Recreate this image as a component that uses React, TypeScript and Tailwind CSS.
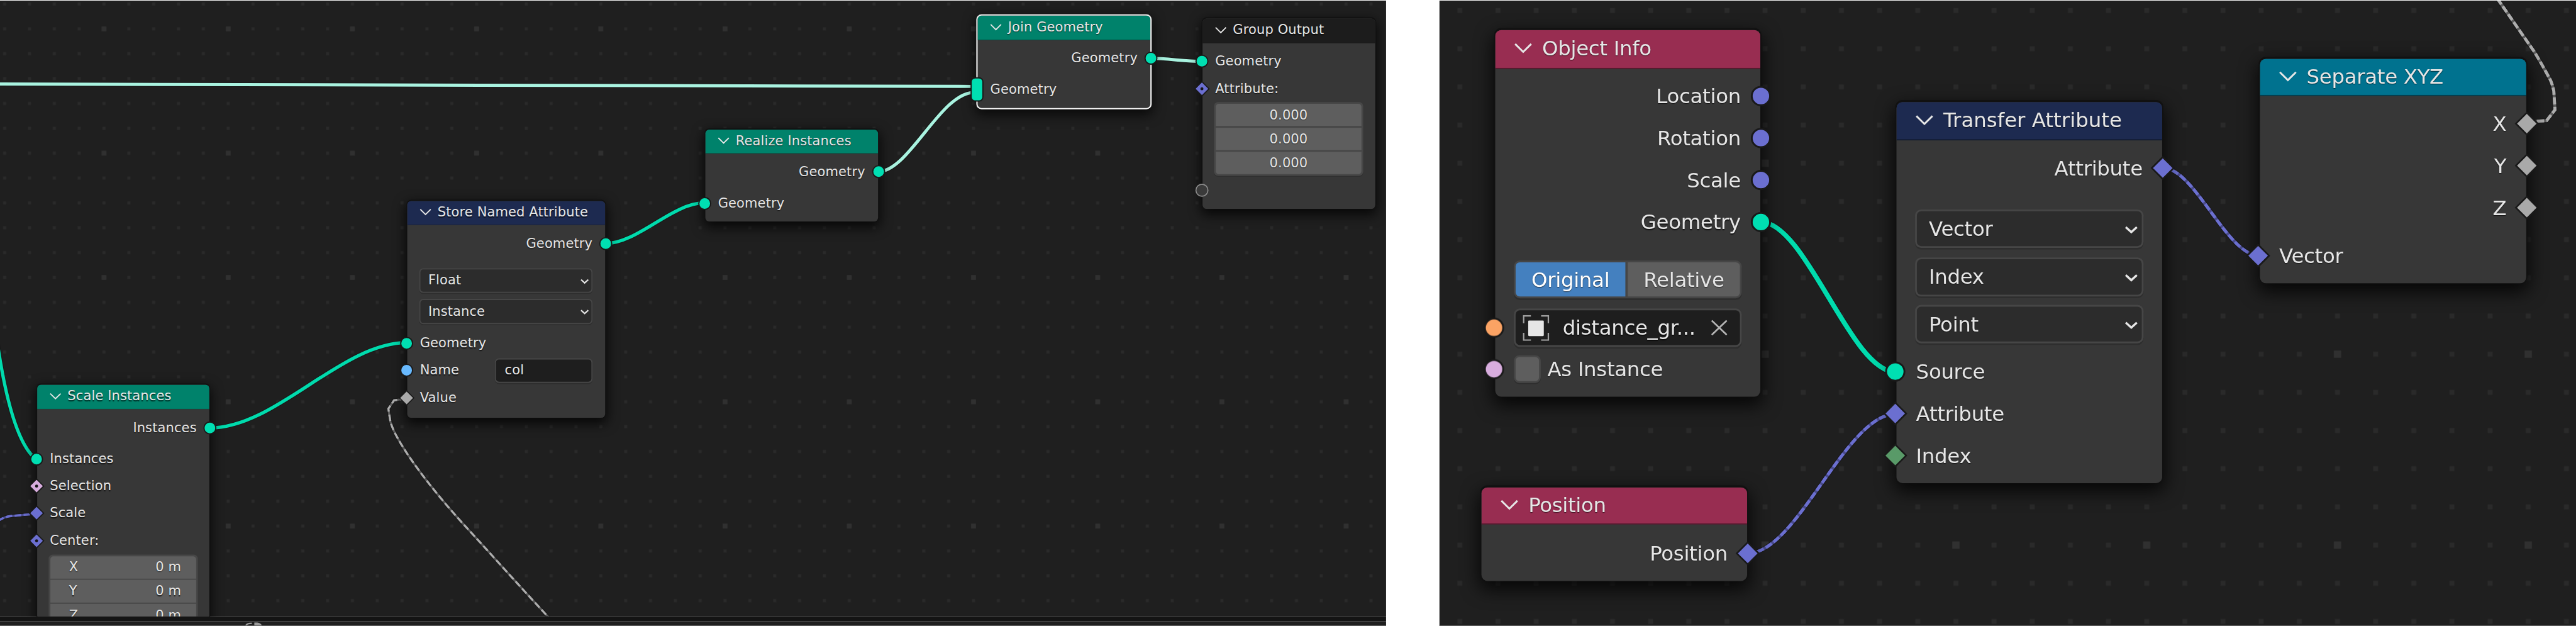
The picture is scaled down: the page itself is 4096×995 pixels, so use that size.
import type { ReactNode } from "react";

type SocketKind = "geometry" | "vector" | "float" | "string" | "boolean" | "integer" | "object";

const SOCKET_COLORS: Record<SocketKind, string> = {
  geometry: "#00dfb2",
  vector: "#6b6fd0",
  float: "#a9a9a9",
  string: "#68b9fe",
  boolean: "#d8adde",
  integer: "#599a68",
  object: "#fba364",
};

function Socket({
  kind,
  shape = "circle",
  side,
}: {
  kind: SocketKind;
  shape?: "circle" | "diamond" | "diamond-dot" | "multi" | "empty";
  side: "left" | "right";
}) {
  const place =
    side === "left"
      ? "absolute left-[-0.06em] top-1/2 -translate-x-1/2 -translate-y-1/2"
      : "absolute right-[-0.04em] top-1/2 translate-x-1/2 -translate-y-1/2";
  const fill = SOCKET_COLORS[kind];
  return (
    <svg className={`${place} h-[2em] w-[1.5em] overflow-visible`} viewBox="-16.5 -22 33 44">
      {shape === "circle" && <circle r="9.9" fill={fill} stroke="#191919" strokeWidth="2" />}
      {shape === "multi" && (
        <rect x="-9.8" y="-19.3" width="19.6" height="38.6" rx="6.5" fill={fill} stroke="#191919" strokeWidth="2" />
      )}
      {shape === "empty" && <circle r="10" fill="#3a3a3a" stroke="#8c8c8c" strokeWidth="1.8" />}
      {(shape === "diamond" || shape === "diamond-dot") && (
        <path d="M0 -11.8 L11.8 0 L0 11.8 L-11.8 0 Z" fill={fill} stroke="#191919" strokeWidth="1.8" />
      )}
      {shape === "diamond-dot" && <circle r="2.5" fill="#141414" />}
    </svg>
  );
}

function Node({
  title,
  header,
  frame,
  selected = false,
  children,
}: {
  title: string;
  header: string;
  frame: string;
  selected?: boolean;
  children: ReactNode;
}) {
  const ring = selected
    ? "shadow-[0_0_0_0.1em_#f4f4f4,0_0.3em_0.9em_0.15em_rgba(0,0,0,0.75)]"
    : "shadow-[0_-0.04em_0_0.06em_#111111,0_0.3em_0.9em_0.1em_rgba(0,0,0,0.8)]";
  return (
    <section className={`absolute flex flex-col rounded-[0.3em] bg-[#373737] ${ring} ${frame}`}>
      <header
        className={`flex shrink-0 items-center rounded-t-[0.3em] border-b-[0.07em] border-black/45 pb-[0.06em] pl-[0.95em] ${header}`}
      >
        <svg className="mr-[0.49em] h-[0.48em] w-[0.86em] overflow-visible" viewBox="0 0 19 10.6">
          <path d="M0.8 0.8 L9.5 9.4 L18.2 0.8" fill="none" stroke="#e6e6e6" strokeWidth="2" />
        </svg>
        <h2>{title}</h2>
      </header>
      {children}
    </section>
  );
}

function Row({
  label,
  kind,
  shape,
  output = false,
  size,
  children,
}: {
  label?: string;
  kind: SocketKind;
  shape?: "circle" | "diamond" | "diamond-dot" | "multi" | "empty";
  output?: boolean;
  size: string;
  children?: ReactNode;
}) {
  return (
    <div className={`relative flex shrink-0 items-center px-[0.96em] ${output ? "justify-end" : "justify-between"} ${size}`}>
      <Socket kind={kind} shape={shape} side={output ? "right" : "left"} />
      <span>{label}</span>
      {children}
    </div>
  );
}

function Dropdown({ value, size }: { value: string; size: string }) {
  return (
    <div
      className={`flex shrink-0 items-center justify-between rounded-[0.3em] border-[0.11em] border-[#464646] bg-[#2c2c2c] pl-[0.59em] pr-[0.2em] shadow-[0_0.08em_0_#2e2e2e] ${size}`}
    >
      <span>{value}</span>
      <svg className="mt-[0.1em] h-[0.34em] w-[0.62em] overflow-visible" viewBox="0 0 13 7">
        <path d="M0.8 0.8 L6.5 6 L12.2 0.8" fill="none" stroke="#e6e6e6" strokeWidth="2.2" />
      </svg>
    </div>
  );
}

function VectorField({ items, className }: { items: { axis?: string; value: string }[]; className: string }) {
  return (
    <div
      className={`flex shrink-0 flex-col gap-[2.7px] rounded-[7px] bg-[#474747] p-[3px] shadow-[0_1.5px_0_#303030] ${className}`}
    >
      {items.map((item, i) => (
        <div
          key={i}
          className={`flex h-[37.3px] items-center bg-[#5e5e5e] first:rounded-t-[5px] last:rounded-b-[5px] ${
            item.axis ? "justify-between pl-[31px] pr-[25px]" : "justify-center"
          }`}
        >
          {item.axis && <span>{item.axis}</span>}
          <span>{item.value}</span>
        </div>
      ))}
    </div>
  );
}

function Grid({ id, pitch, x, y, small, large }: { id: string; pitch: number; x: number; y: number; small: number; large: number }) {
  const tile = pitch * 5;
  return (
    <>
      <defs>
        <pattern id={`${id}-s`} patternUnits="userSpaceOnUse" width={pitch} height={pitch} x={x - pitch / 2} y={y - pitch / 2}>
          <rect x={(pitch - small) / 2} y={(pitch - small) / 2} width={small} height={small} fill="#2a2a2a" />
        </pattern>
        <pattern id={`${id}-l`} patternUnits="userSpaceOnUse" width={tile} height={tile} x={x - tile / 2} y={y - tile / 2}>
          <rect x={(tile - large) / 2} y={(tile - large) / 2} width={large} height={large} fill="#303030" />
        </pattern>
      </defs>
      <rect width="100%" height="100%" fill={`url(#${id}-s)`} />
      <rect width="100%" height="100%" fill={`url(#${id}-l)`} />
    </>
  );
}

function Link({
  d,
  color,
  width,
  dash,
  dim,
}: {
  d: string;
  color: string;
  width: number;
  dash?: string;
  dim?: string;
}) {
  return (
    <g fill="none">
      <path d={d} stroke="#141414" strokeOpacity="0.55" strokeWidth={width + 2.5} />
      {dim && <path d={d} stroke={dim} strokeWidth={width} />}
      <path d={d} stroke={color} strokeWidth={width} strokeDasharray={dash} />
    </g>
  );
}

function InstancingEditor() {
  return (
    <div className="flex h-[1042px] w-[2311px] flex-col">
      <div className="relative h-[1026px] overflow-hidden bg-[#1f1f1f] text-[22px] leading-none tracking-[0.006em]">
        <svg className="absolute inset-0 h-full w-full" viewBox="0 0 2311 1026">
          <Grid id="grid-a" pitch={41.42} x={380.5} y={875.5} small={5} large={8} />
          <Link d="M0 139 C540 139 1080 143 1622 143" color="#a9f3e0" width={5.2} />
          <Link d="M1464 285 C1516 285 1568 153 1624 153" color="#a9f3e0" width={5.2} />
          <Link d="M1919 96.3 C1947 96.3 1975 101.3 2004 101.3" color="#a9f3e0" width={5.2} />
          <Link d="M1009 404.7 C1064 404.7 1120 337 1175 337" color="#00dbad" width={5.5} />
          <Link d="M350 712 C460 712 569 570 678 570" color="#00dbad" width={5.5} />
          <Link d="M-6 559 C8 659 28 739 60 764" color="#00dbad" width={5.5} />
          <Link d="M-4 867 Q8 860 16 859 L60 855" color="#6b6fd0" width={3.6} dash="11 4" dim="#4a4c8c" />
          <Link
            d="M678 663 L657 666 L647.5 680 L651 702 Q655 715 663 729 C690 777 740 837 777 877 S860 969 917 1030"
            color="#adadad"
            width={3.4}
            dash="11 5"
            dim="#5e5e5e"
          />
        </svg>

        <Node title="Scale Instances" header="h-[41px] bg-[#00826b]" frame="left-[62px] top-[640px] w-[287px] h-[410px]">
          <Row label="Instances" kind="geometry" output size="h-[62px]" />
          <Row label="Instances" kind="geometry" size="h-[42.5px]" />
          <Row label="Selection" kind="boolean" shape="diamond-dot" size="h-[46px]" />
          <Row label="Scale" kind="vector" shape="diamond" size="h-[45.5px]" />
          <Row label="Center:" kind="vector" shape="diamond-dot" size="h-[45.5px]" />
          <VectorField
            className="mx-[19px]"
            items={[
              { axis: "X", value: "0 m" },
              { axis: "Y", value: "0 m" },
              { axis: "Z", value: "0 m" },
            ]}
          />
        </Node>

        <Node title="Store Named Attribute" header="h-[40.5px] bg-[#1d2a50]" frame="left-[679px] top-[333.5px] w-[330px] h-[361.5px]">
          <Row label="Geometry" kind="geometry" output size="h-[61.4px]" />
          <Dropdown value="Float" size="mt-[10.6px] ml-[20px] mr-[21px] h-[41px]" />
          <Dropdown value="Instance" size="mt-[10px] mb-[8.7px] ml-[20px] mr-[21px] h-[42px]" />
          <Row label="Geometry" kind="geometry" size="h-[46px]" />
          <Row label="Name" kind="string" size="h-[45.5px]">
            <div className="flex h-[41px] w-[163.4px] items-center rounded-[7px] border-[2.5px] border-[#464646] bg-[#1e1e1e] pl-[15px] shadow-[0_2px_0_#2e2e2e]">
              col
            </div>
          </Row>
          <Row label="Value" kind="float" shape="diamond" size="h-[45.5px]" />
        </Node>

        <Node title="Realize Instances" header="h-[40px] bg-[#00826b]" frame="left-[1176px] top-[214.7px] w-[287.7px] h-[153px]">
          <Row label="Geometry" kind="geometry" output size="h-[61px]" />
          <Row label="Geometry" kind="geometry" size="h-[43.8px]" />
        </Node>

        <Node title="Join Geometry" header="h-[40.5px] bg-[#00826b]" frame="left-[1630px] top-[25px] w-[288px] h-[153.5px]" selected>
          <Row label="Geometry" kind="geometry" output size="h-[61.6px]" />
          <Row label="Geometry" kind="geometry" shape="multi" size="h-[42px]" />
        </Node>

        <Node title="Group Output" header="h-[41px] bg-[#1c1c1c]" frame="left-[2005px] top-[29.7px] w-[288px] h-[317.3px]">
          <Row label="Geometry" kind="geometry" size="mt-[8px] h-[45.4px]" />
          <Row label="Attribute:" kind="vector" shape="diamond-dot" size="h-[45px]" />
          <VectorField className="ml-[19px] mr-[20px]" items={[{ value: "0.000" }, { value: "0.000" }, { value: "0.000" }]} />
          <Row kind="float" shape="empty" size="mt-[0.6px] h-[46px]" />
        </Node>
      </div>
      <div className="h-[8px] bg-[#141414]" />
      <div className="flex h-[8px] flex-col justify-end border-b border-[#6a6a6a] bg-[#1f1f1f] pl-[409px]">
        <svg className="h-[5px] w-[28px]" viewBox="0 0 28 5">
          <path d="M1 5 Q3 1.5 11 1.5" fill="none" stroke="#9a9a9a" strokeWidth="2.4" />
          <path d="M15 0 H20 Q26 1 27.5 5 H15 Z" fill="#9a9a9a" />
        </svg>
      </div>
    </div>
  );
}

function TransferEditor() {
  return (
    <div className="relative h-[1042px] w-[1895px] overflow-hidden border-b border-[#6a6a6a] bg-[#1f1f1f] text-[34px] leading-none tracking-[-0.01em]">
      <svg className="absolute inset-0 h-full w-full" viewBox="0 0 1895 1041" preserveAspectRatio="xMinYMin slice">
        <Grid id="grid-b" pitch={63.62} x={543} y={271} small={8} large={12} />
        <Link d="M536 369 C611 369 686 618.5 760 618.5" color="#00dbad" width={8} />
        <Link d="M514 921 C596 921 678 689 760 689" color="#6b6fd0" width={5.2} dash="12 4" dim="#4a4c8c" />
        <Link d="M1206 278.7 C1259 278.7 1313 424.7 1366 424.7" color="#6b6fd0" width={5.2} dash="12 4" dim="#4a4c8c" />
        <Link
          d="M1814 203 L1830 201 L1846 200 L1860 182 L1858 151 Q1855 136 1850 128 Q1838 106 1826 86 L1762 -6"
          color="#adadad"
          width={5}
          dash="12 4"
          dim="#5e5e5e"
        />
      </svg>

      <Node title="Object Info" header="h-[65px] bg-[#982d51]" frame="left-[93px] top-[49px] w-[442px] h-[611px]">
        <Row label="Location" kind="vector" output size="mt-[10px] h-[70px]" />
        <Row label="Rotation" kind="vector" output size="h-[70px]" />
        <Row label="Scale" kind="vector" output size="h-[70px]" />
        <Row label="Geometry" kind="geometry" output size="h-[70px]" />
        <div className="mx-[31px] mt-[29px] flex h-[63px] shrink-0 gap-[4px] rounded-[10px] bg-[#464646] p-[3px] shadow-[0_3px_0_#2e2e2e]">
          <div className="flex w-[183px] items-center justify-center rounded-l-[7px] bg-[#4480bf] text-white">Original</div>
          <div className="flex flex-1 items-center justify-center rounded-r-[7px] bg-[#5e5e5e]">Relative</div>
        </div>
        <div className="relative mt-[17px] flex shrink-0 px-[31px]">
          <Socket kind="object" side="left" />
          <div className="flex h-[64px] w-full items-center rounded-[10px] border-[3.5px] border-[#464646] bg-[#1e1e1e] pl-[11.5px] pr-[21px] shadow-[0_3px_0_#2e2e2e]">
            <svg className="h-[43px] w-[44px]" viewBox="0 0 44 43">
              <path
                d="M1.3 13.5 V1.3 H13.5 M30.5 1.3 H42.7 V13.5 M42.7 29.5 V41.7 H30.5 M13.5 41.7 H1.3 V29.5"
                fill="none"
                stroke="#a0a0a0"
                strokeWidth="2.6"
              />
              <rect x="9" y="9" width="26" height="26" rx="1.5" fill="#e6e6e6" />
            </svg>
            <span className="ml-[23px] flex-1">distance_gr...</span>
            <svg className="h-[26px] w-[27px]" viewBox="0 0 27 26">
              <path d="M1 1 L26 25 M26 1 L1 25" fill="none" stroke="#b4b4b4" strokeWidth="2.8" />
            </svg>
          </div>
        </div>
        <div className="relative mt-[13.5px] flex h-[46px] shrink-0 items-center gap-[11px] px-[31px]">
          <Socket kind="boolean" side="left" />
          <div className="h-[46px] w-[45px] rounded-[9px] border-[3.5px] border-[#464646] bg-[#5e5e5e] shadow-[0_2px_0_#2e2e2e]" />
          <span>As Instance</span>
        </div>
      </Node>

      <Node title="Position" header="h-[62px] bg-[#982d51]" frame="left-[70px] top-[811px] w-[443px] h-[156px]">
        <Row label="Position" kind="vector" shape="diamond" output size="h-[95px]" />
      </Node>

      <Node title="Transfer Attribute" header="h-[64px] bg-[#1d2a50] tracking-normal" frame="left-[762px] top-[169px] w-[443px] h-[635.4px]">
        <Row label="Attribute" kind="vector" shape="diamond" output size="h-[91.4px]" />
        <Dropdown value="Vector" size="mt-[23.6px] mx-[31px] h-[64px]" />
        <Dropdown value="Index" size="mt-[16px] mx-[31px] h-[65px]" />
        <Dropdown value="Point" size="mt-[13.7px] mx-[31px] mb-[12.5px] h-[64px]" />
        <Row label="Source" kind="geometry" size="h-[70px]" />
        <Row label="Attribute" kind="vector" shape="diamond" size="h-[70px]" />
        <Row label="Index" kind="integer" shape="diamond" size="h-[70px]" />
      </Node>

      <Node title="Separate XYZ" header="h-[62px] bg-[#00728f]" frame="left-[1367.5px] top-[96.7px] w-[444px] h-[374px]">
        <Row label="X" kind="float" shape="diamond" output size="mt-[11.6px] h-[70px]" />
        <Row label="Y" kind="float" shape="diamond" output size="h-[70px]" />
        <Row label="Z" kind="float" shape="diamond" output size="h-[70px]" />
        <Row label="Vector" kind="vector" shape="diamond" size="mt-[9.4px] h-[70px]" />
      </Node>
    </div>
  );
}

export default function App() {
  return (
    <div className="h-[995px] w-[4096px] overflow-hidden bg-white">
      <main className="flex h-[1043px] w-[4295px] origin-top-left scale-x-[0.95367] scale-y-[0.95398] justify-between pt-[1px] font-['DejaVu_Sans',sans-serif] text-[#e6e6e6] [text-shadow:0_0.08em_0.08em_rgba(0,0,0,0.65)]">
        <InstancingEditor />
        <TransferEditor />
      </main>
    </div>
  );
}
